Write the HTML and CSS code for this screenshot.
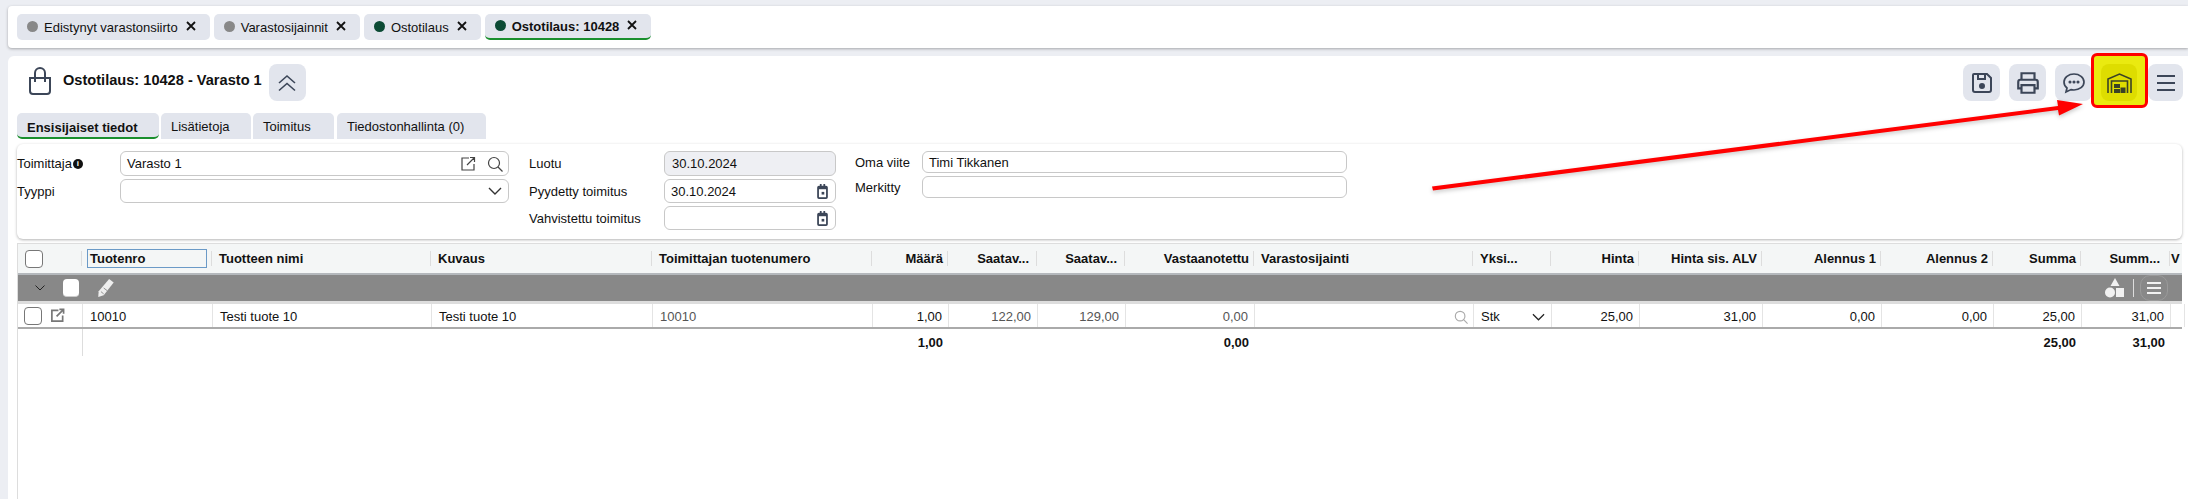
FILE: index.html
```html
<!DOCTYPE html>
<html lang="fi">
<head>
<meta charset="utf-8">
<title>Ostotilaus: 10428</title>
<link rel="stylesheet" href="styles.css">
</head>
<body>
<header class="tabbar">
  <div class="chip"><span class="dot dot-grey"></span><span class="chip-text">Edistynyt varastonsiirto</span><svg class="x" viewBox="0 0 10 10" width="10" height="10" stroke="#111" stroke-width="1.800"><path d="M1 1l8 8M9 1L1 9"/></svg></div>
  <div class="chip"><span class="dot dot-grey"></span><span class="chip-text">Varastosijainnit</span><svg class="x" viewBox="0 0 10 10" width="10" height="10" stroke="#111" stroke-width="1.800"><path d="M1 1l8 8M9 1L1 9"/></svg></div>
  <div class="chip"><span class="dot dot-green"></span><span class="chip-text">Ostotilaus</span><svg class="x" viewBox="0 0 10 10" width="10" height="10" stroke="#111" stroke-width="1.800"><path d="M1 1l8 8M9 1L1 9"/></svg></div>
  <div class="chip chip-active"><span class="dot dot-green"></span><span class="chip-text">Ostotilaus: 10428</span><svg class="x" viewBox="0 0 10 10" width="10" height="10" stroke="#111" stroke-width="1.800"><path d="M1 1l8 8M9 1L1 9"/></svg></div>
</header>
<main class="card">
  <div class="titlebar">
    <svg class="bag" viewBox="0 0 24 28" fill="none" stroke="#3c4658" stroke-width="2"><path d="M2 11h20v13a3 3 0 0 1-3 3H5a3 3 0 0 1-3-3z"/><path d="M7 15V6a5 5 0 0 1 10 0v9"/></svg>
    <h1 class="title">Ostotilaus: 10428 - Varasto 1</h1>
    <button class="btn btn-collapse"><svg viewBox="0 0 18 18" width="18" height="18" fill="none" stroke="#3c4658" stroke-width="1.600"><path d="M1 9l8-7 8 7M1 16.500l8-7 8 7"/></svg></button>
    <div class="actions">
      <button class="btn"><svg viewBox="0 0 24 24" width="24" height="24" fill="none" stroke="#3c4658" stroke-width="2"><path d="M4 3h13l4 4v12a2 2 0 0 1-2 2H5a2 2 0 0 1-2-2V4a1 1 0 0 1 1-1z"/><path d="M8 3v5h7V3"/><circle cx="12" cy="15" r="2" fill="#3c4658"/></svg></button>
      <button class="btn"><svg viewBox="0 0 24 24" width="26" height="26" fill="none" stroke="#3c4658" stroke-width="2"><path d="M6 9V3h12v6"/><path d="M6 17H3v-6a2 2 0 0 1 2-2h14a2 2 0 0 1 2 2v6h-3"/><path d="M6 14h12v7H6z"/></svg></button>
      <button class="btn"><svg viewBox="0 0 24 24" width="24" height="24" fill="none" stroke="#3c4658" stroke-width="1.700"><path d="M12 3c5.500 0 10 3.500 10 8s-4.500 8-10 8c-1 0-2-.100-3-.400L4 21l1-4c-2-1.500-3-3.500-3-6 0-4.500 4.500-8 10-8z"/><circle cx="8" cy="11" r=".7"/><circle cx="12" cy="11" r=".7"/><circle cx="16" cy="11" r=".7"/></svg></button>
      <div class="hl"><button class="btn btn-hl"><svg viewBox="0 0 25 20" width="25" height="20" fill="none" stroke="#3a4226" stroke-width="1.600"><path d="M1 20V6l11.500-5L24 6v14"/><path d="M4.500 20V8h16v12"/><path d="M7 11h6v4H7zM7 16h6v4H7zM13.500 14.500h5V20h-5z" fill="#3a4226" stroke="none"/></svg></button></div>
      <button class="btn btn-menu"><svg viewBox="0 0 24 24" width="24" height="24" fill="none" stroke="#3c4658" stroke-width="2"><path d="M3 5h18M3 12h18M3 19h18"/></svg></button>
    </div>
  </div>
  <nav class="tabs">
    <div class="tab tab-active">Ensisijaiset tiedot</div>
    <div class="tab tab-2">Lisätietoja</div>
    <div class="tab tab-3">Toimitus</div>
    <div class="tab tab-4">Tiedostonhallinta (0)</div>
  </nav>
  <section class="form">
    <div class="fcol fcol-1">
      <div class="frow frow-a"><label class="lab">Toimittaja<span class="info">i</span></label><div class="inp inp-big">Varasto 1
        <span class="inp-icons"><svg viewBox="0 0 16 16" width="16" height="16" fill="none" stroke="#444" stroke-width="1.200"><path d="M9 2H2v12h12V8M7 9l7-7M10 1.500h4.500V6"/></svg><svg viewBox="0 0 16 16" width="16" height="16" fill="none" stroke="#444" stroke-width="1.200"><circle cx="7" cy="7" r="5.500"/><path d="M11 11l4.500 4.500"/></svg></span></div></div>
      <div class="frow frow-b"><label class="lab">Tyyppi</label><div class="inp inp-big"><span class="inp-icons"><svg viewBox="0 0 16 16" width="16" height="16" fill="none" stroke="#333" stroke-width="1.400"><path d="M2 5l6 6 6-6"/></svg></span></div></div>
    </div>
    <div class="fcol fcol-2">
      <div class="frow frow-c"><label class="lab lab-2">Luotu</label><div class="inp inp-date inp-disabled">30.10.2024</div></div>
      <div class="frow frow-b"><label class="lab lab-2">Pyydetty toimitus</label><div class="inp inp-date">30.10.2024<span class="inp-icons"><svg viewBox="0 0 14 18" width="13" height="16"><path d="M1 5a2 2 0 0 1 2-2h1V1h2v2h2V1h2v2h1a2 2 0 0 1 2 2v11a2 2 0 0 1-2 2H3a2 2 0 0 1-2-2z" fill="#3c4658"/><path d="M3 7h8v9H3z" fill="#fff"/><path d="M6 10h3v3H6z" fill="#3c4658"/></svg></span></div></div>
      <div class="frow frow-b"><label class="lab lab-2">Vahvistettu toimitus</label><div class="inp inp-date"><span class="inp-icons"><svg viewBox="0 0 14 18" width="13" height="16"><path d="M1 5a2 2 0 0 1 2-2h1V1h2v2h2V1h2v2h1a2 2 0 0 1 2 2v11a2 2 0 0 1-2 2H3a2 2 0 0 1-2-2z" fill="#3c4658"/><path d="M3 7h8v9H3z" fill="#fff"/><path d="M6 10h3v3H6z" fill="#3c4658"/></svg></span></div></div>
    </div>
    <div class="fcol fcol-3">
      <div class="frow frow-d"><label class="lab lab-3">Oma viite</label><div class="inp inp-wide">Timi Tikkanen</div></div>
      <div class="frow frow-d"><label class="lab lab-3">Merkitty</label><div class="inp inp-wide"></div></div>
    </div>
  </section>
  <section class="grid">
    <div class="row head">
      <div class="c c-first"><span class="cb"></span></div>
      <div class="c"><span class="focus">Tuotenro</span></div>
      <div class="c">Tuotteen nimi</div>
      <div class="c">Kuvaus</div>
      <div class="c">Toimittajan tuotenumero</div>
      <div class="c r">Määrä</div>
      <div class="c r c-trunc">Saatav...</div>
      <div class="c r c-trunc">Saatav...</div>
      <div class="c r">Vastaanotettu</div>
      <div class="c">Varastosijainti</div>
      <div class="c">Yksi...</div>
      <div class="c r">Hinta</div>
      <div class="c r">Hinta sis. ALV</div>
      <div class="c r">Alennus 1</div>
      <div class="c r">Alennus 2</div>
      <div class="c r">Summa</div>
      <div class="c r c-trunc-2">Summ...</div>
      <div class="c c-clip">V</div>
    </div>
    <div class="group">
      <svg class="g-chev" viewBox="0 0 10 6" width="10" height="6" fill="none" stroke="#222" stroke-width="1"><path d="M.5.500L5 5 9.500.500"/></svg>
      <span class="cb cb-white"></span>
      <svg class="g-pen" viewBox="0 0 20 22" width="19" height="20" fill="#eee"><path d="M14 1l5 4-11 14-6 2 .500-6.500z"/><path d="M5 15l3 2.500M8 11l4 3" stroke="#888" stroke-width="1"/></svg>
      <span class="g-right">
        <svg viewBox="0 0 20 20" width="20" height="20" fill="#f1f1f1"><path d="M10 0l4.500 8h-9z"/><circle cx="5" cy="14.500" r="5"/><path d="M11 10h8v9h-8z"/></svg>
        <span class="g-sep"></span>
        <span class="g-menu"><svg viewBox="0 0 14 14" width="14" height="14" stroke="#f1f1f1" stroke-width="2"><path d="M0 2h14M0 7h14M0 12h14"/></svg></span>
      </span>
    </div>
    <div class="row data">
      <div class="c c-first c-first-data"><span class="cb"></span><svg viewBox="0 0 16 16" width="15" height="15" fill="none" stroke="#777" stroke-width="1.800"><path d="M9 2.500H2v11.500h11.500V8M7 9l7-7M10 1.500h4.500V6"/></svg></div>
      <div class="c">10010</div>
      <div class="c">Testi tuote 10</div>
      <div class="c">Testi tuote 10</div>
      <div class="c muted">10010</div>
      <div class="c r">1,00</div>
      <div class="c r muted">122,00</div>
      <div class="c r muted">129,00</div>
      <div class="c r muted">0,00</div>
      <div class="c c-search"><svg viewBox="0 0 16 16" width="14" height="14" fill="none" stroke="#aaa" stroke-width="1.300"><circle cx="7" cy="7" r="5.500"/><path d="M11 11l4.500 4.500"/></svg></div>
      <div class="c c-unit">Stk<svg viewBox="0 0 14 8" width="13" height="8" fill="none" stroke="#222" stroke-width="1.300"><path d="M1 1l6 6 6-6"/></svg></div>
      <div class="c r">25,00</div>
      <div class="c r">31,00</div>
      <div class="c r">0,00</div>
      <div class="c r">0,00</div>
      <div class="c r">25,00</div>
      <div class="c r">31,00</div>
      <div class="c"></div>
    </div>
    <div class="row total">
      <div class="c c-first"></div>
      <div class="c"></div><div class="c"></div><div class="c"></div><div class="c"></div>
      <div class="c r">1,00</div>
      <div class="c"></div><div class="c"></div>
      <div class="c r">0,00</div>
      <div class="c"></div><div class="c"></div><div class="c"></div><div class="c"></div><div class="c"></div><div class="c"></div>
      <div class="c r">25,00</div>
      <div class="c r">31,00</div>
      <div class="c"></div>
    </div>
  </section>
</main>
<svg class="arrow" viewBox="0 0 2188 499" width="2188" height="499"><path d="M1432 186.500L2058 106 2057 100 2083 104 2059 115.500 2058 110 1433 190.500z" fill="#f00"/></svg>
</body>
</html>
```
FILE: styles.css
```css
* { box-sizing: border-box; }
body {
  margin: 0;
  height: 499px;
  overflow: hidden;
  background: #eceef3;
  font-family: "Liberation Sans", Arial, sans-serif;
  font-size: 13px;
  color: #111;
  padding: 6px 0 0 8px;
  position: relative;
}
.tabbar {
  height: 42px;
  background: #fff;
  box-shadow: 0 1px 3px rgba(0,0,0,.3);
  border-radius: 4px 0 0 4px;
  display: flex;
  align-items: flex-start;
  gap: 4px;
  padding: 8px 0 0 9px;
}
.chip {
  height: 26px;
  background: #e2e5ed;
  border-radius: 5px;
  display: flex;
  align-items: center;
  padding: 0 14px 0 10px;
  white-space: nowrap;
}
.chip-active { border-bottom: 2px solid #1a8f2e; font-weight: 700; }
.dot { width: 11px; height: 11px; border-radius: 50%; flex: none; margin: -2px 6px 0 0; }
.dot-grey { background: #888; }
.dot-green { background: #0b4a34; }
.chip-text { margin-top: 1px; }
.x { margin: -3px 0 0 8px; flex: none; }
.card {
  margin-top: 8px;
  height: 443px;
  background: #fff;
  border-radius: 6px 0 0 0;
  padding: 0 6px 0 9px;
}
.titlebar {
  height: 57px;
  display: flex;
  align-items: flex-start;
  padding-top: 8px;
}
.bag { width: 24px; height: 28px; margin: 3px 11px 0 11px; flex: none; }
.title { font-size: 14.6px; font-weight: 700; margin: 8px 0 0; line-height: 17px; white-space: nowrap; }
.btn {
  width: 37px;
  height: 37px;
  border: 0;
  padding: 0;
  border-radius: 8px;
  background: #e2e5ed;
  display: flex;
  align-items: center;
  justify-content: center;
  flex: none;
}
.btn-collapse { margin-left: 7px; }
.actions { margin-left: auto; display: flex; align-items: flex-start; gap: 9px; }
.hl {
  margin: -11px 0 0 -10px;
  padding: 8px 8px 4px 7px;
  border: 3px solid #f00;
  border-radius: 6px;
  background: #eaea10;
  height: 55px;
}
.btn-hl { width: 36px; background: #dedd00; }
.btn-menu { width: 35px; margin-left: -9px; margin-right: -1px; }
.tabs { display: flex; gap: 2px; height: 26px; }
.tab {
  background: #e2e5ed;
  border-radius: 5px 5px 0 0;
  padding: 0 0 0 10px;
  display: flex;
  align-items: center;
  white-space: nowrap;
  width: 90px;
}
.tab-active {
  width: 142px;
  padding: 4px 0 0 10px;
  font-weight: 700;
  border-bottom: 2px solid #1a8f2e;
  border-radius: 5px;
}
.tab-3 { width: 81px; margin-right: 1px; }
.tab-4 { width: 149px; }
.form {
  margin-top: 5px;
  height: 95px;
  border-radius: 6px;
  box-shadow: 0 1px 3px rgba(0,0,0,.3);
  display: flex;
  padding-top: 7px;
}
.fcol { display: flex; flex-direction: column; flex: none; }
.fcol-1 { width: 492px; gap: 3px; }
.fcol-2 { width: 307px; margin-left: 20px; gap: 3px; }
.fcol-3 { width: 492px; margin-left: 19px; gap: 3px; }
.frow { display: flex; align-items: center; }
.frow-a { height: 25px; }
.frow-b { height: 24px; }
.frow-c { height: 25px; }
.frow-d { height: 22px; }
.lab { flex: none; width: 103px; }
.lab-2 { width: 135px; }
.lab-3 { width: 67px; }
.info {
  display: inline-block;
  width: 10px;
  height: 10px;
  margin-left: 1px;
  border-radius: 50%;
  background: #111;
  color: #fff;
  font-size: 8px;
  line-height: 10px;
  text-align: center;
  vertical-align: 2px;
  font-weight: 700;
}
.inp {
  height: 100%;
  border: 1px solid #c8c8c8;
  border-radius: 6px;
  background: #fff;
  padding: 0 5px 0 6px;
  display: flex;
  align-items: center;
  justify-content: space-between;
}
.inp-big { width: 389px; }
.inp-date { width: 172px; padding-right: 6px; }
.inp-wide { width: 425px; }
.inp-disabled { background: #eeeff3; padding-left: 7px; }
.inp-icons { display: flex; gap: 11px; margin-left: auto; align-items: center; }
.grid {
  margin-top: 4px;
  height: 256px;
  border-left: 1px solid #ddd;
}
.row {
  display: grid;
  grid-template-columns: 65px 130px 219px 221px 220px 76px 89px 88px 129px 219px 78px 88px 123px 119px 112px 88px 89px 11px;
}
.c {
  display: flex;
  align-items: center;
  padding: 0 6px 0 8px;
  white-space: nowrap;
  overflow: hidden;
  min-width: 0;
}
.r { justify-content: flex-end; }
.muted { color: #555; }
.head {
  height: 32px;
  background: #f4f6f6;
  font-weight: 700;
  border-top: 1px solid #ddd;
  border-bottom: 2px solid #b4b8bc;
}
.head .c { position: relative; height: 29px; padding-left: 6px; }
.head .c::after {
  content: "";
  position: absolute;
  right: 1px;
  top: 7px;
  height: 15px;
  width: 1px;
  background: #ddd;
}
.head .c-first { padding-left: 7px; }
.head .c-trunc { padding-right: 9px; }
.head .c-trunc-2 { padding-right: 11px; }
.head .c-clip { padding: 0; overflow: visible; }
.head .c-clip::after { display: none; }
.focus {
  width: 122px;
  height: 19px;
  margin-left: -2px;
  padding: 0 2px;
  border: 1px solid #6b9ac7;
  line-height: 17px;
}
.cb {
  display: block;
  width: 18px;
  height: 18px;
  border: 1px solid #777;
  border-radius: 4px;
  background: #fff;
  flex: none;
}
.group {
  height: 26px;
  background: #888;
  display: flex;
  align-items: center;
  padding-left: 17px;
}
.g-chev { margin-right: 18px; }
.cb-white { width: 16px; height: 18px; border: 0; border-bottom: 1px solid #ccc; }
.g-pen { margin-left: 17px; }
.g-right { margin-left: auto; display: flex; align-items: center; margin-right: 14px; }
.g-sep { width: 1px; height: 18px; background: #ddd; margin: 0 6px 0 8px; }
.g-menu {
  width: 28px;
  height: 26px;
  border: 1px solid #9a9a9a;
  border-radius: 10px;
  display: flex;
  align-items: center;
  justify-content: center;
}
.data {
  height: 28px;
  border-top: 3px solid #ddd;
  border-bottom: 2px solid #aaa;
}
.data .c { height: 23px; padding-top: 2px; padding-left: 7px; border-right: 1px solid #e4e4e4; }
.data .c-first-data { gap: 8px; padding-left: 6px; padding-top: 0; }
.c-search { justify-content: flex-end; padding-right: 5px; }
.c-unit { justify-content: space-between; padding-right: 6px; }
.total { height: 27px; font-weight: 700; }
.total .c { height: 27px; }
.total .c-first { border-right: 1px solid #ddd; }
.arrow {
  position: absolute;
  left: 0;
  top: 0;
  pointer-events: none;
  filter: drop-shadow(0 2px 2px rgba(0,0,0,.22));
}
```
